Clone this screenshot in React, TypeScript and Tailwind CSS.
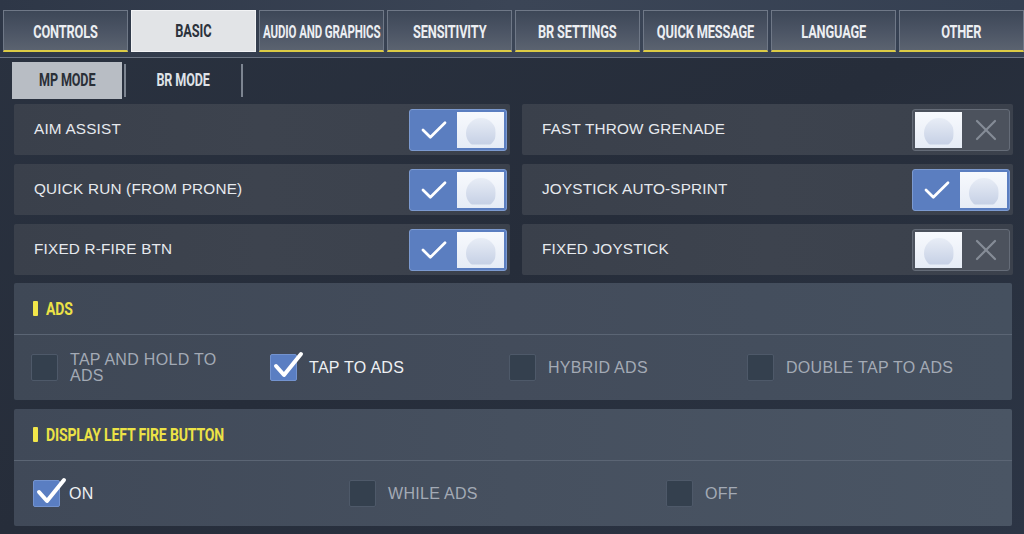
import React from "react";

const condensed = {
  fontFamily: '"Roboto", "Liberation Sans", sans-serif',
};

const tabs = ["CONTROLS", "BASIC", "AUDIO AND GRAPHICS", "SENSITIVITY", "BR SETTINGS", "QUICK MESSAGE", "LANGUAGE", "OTHER"];

function Check({ className = "" }: { className?: string }) {
  return (
    <svg viewBox="0 0 30 24" className={className} fill="none" stroke="white" strokeWidth="3" strokeLinecap="round" strokeLinejoin="round">
      <polyline points="3,12 11,20 27,4" />
    </svg>
  );
}

function Toggle({ on }: { on: boolean }) {
  const knob = (
    <div className="w-[47px] h-full bg-gradient-to-b from-[#f7f9fd] to-[#e6ecf6] flex items-center justify-center">
      <div className="w-[30px] h-[30px] rounded-full bg-gradient-to-b from-[#e8edf6] to-[#c2cde3] translate-y-[3px] [clip-path:inset(0_0_3px_0)]" />
    </div>
  );
  if (on) {
    return (
      <div className="flex w-[98px] h-[42px] rounded-[3px] border border-[#7c9ad0] bg-[#5b7ec0] overflow-hidden shrink-0 p-[2px] pl-0">
        <div className="flex-1 h-full flex items-center justify-center">
          <Check className="w-[28px] h-[22px]" />
        </div>
        {knob}
      </div>
    );
  }
  return (
    <div className="flex w-[98px] h-[42px] rounded-[3px] border border-[#656c78] bg-[#4c525d] overflow-hidden shrink-0 p-[2px] pr-0">
      {knob}
      <div className="flex-1 h-full flex items-center justify-center">
        <svg viewBox="0 0 24 24" className="w-[24px] h-[24px]" stroke="#858c97" strokeWidth="2.2" strokeLinecap="round">
          <line x1="3" y1="3" x2="21" y2="21" />
          <line x1="21" y1="3" x2="3" y2="21" />
        </svg>
      </div>
    </div>
  );
}

function Row({ label, on }: { label: string; on: boolean }) {
  return (
    <div className="h-[51px] bg-gradient-to-r from-[#3a404b] via-[#3d434e] to-[#3b414c] rounded-[2px] flex items-center justify-between pl-[20px] pr-[3px]">
      <span className="text-[15.3px] text-[#e6e9ee] tracking-[0.2px]">{label}</span>
      <Toggle on={on} />
    </div>
  );
}

function Box({ checked }: { checked: boolean }) {
  if (checked) {
    return (
      <div className="relative w-[27px] h-[27px] shrink-0 rounded-[2px] bg-[#5a7ec2] border border-[#7393cf]">
        <svg viewBox="0 0 34 30" className="absolute left-[2px] top-[-6px] w-[34px] h-[30px] overflow-visible" fill="none" stroke="white" strokeWidth="4" strokeLinecap="round" strokeLinejoin="round">
          <polyline points="3,17 11,26 28,5" />
        </svg>
      </div>
    );
  }
  return <div className="w-[27px] h-[27px] shrink-0 rounded-[2px] bg-[#34404e] border border-[#4e5969]" />;
}

function Option({ label, checked, w, narrow, gap = "gap-[12px]" }: { label: string; checked: boolean; w: string; narrow?: boolean; gap?: string }) {
  return (
    <div className={`flex items-center ${gap} ${w}`}>
      <Box checked={checked} />
      <span
        className={`text-[16px] tracking-[0.3px] leading-[16px] ${checked ? "text-[#eef0f3]" : "text-[#a3aab5]"} ${narrow ? "w-[160px]" : ""}`}
      >
        {label}
      </span>
    </div>
  );
}

function SectionHeader({ title }: { title: string }) {
  return (
    <div className="h-[52px] flex items-center pl-[19px] border-b border-[#5b6574]">
      <div className="w-[5px] h-[15px] bg-[#f2e64a] rounded-[1px] mr-[8px] shrink-0" />
      <span style={condensed} className="inline-block whitespace-nowrap origin-left scale-x-[0.78] text-[18px] leading-none font-bold text-[#ece246] tracking-[-0.2px]">
        {title}
      </span>
    </div>
  );
}

export default function App() {
  return (
    <div
      className="w-[1024px] h-[534px] overflow-hidden relative bg-gradient-to-br from-[#2a3240] via-[#262d3a] to-[#2c3545]"
      style={{ fontFamily: '"Liberation Sans", Arial, sans-serif' }}
    >
      {/* top band */}
      <div className="bg-gradient-to-r from-[#2e3747] via-[#3b4556] to-[#354052] pt-[10px] pl-[3px] pb-[5px] border-b border-[#6d7684]">
        <div className="flex gap-[3px]">
          {tabs.map((t) => {
            const active = t === "BASIC";
            return (
              <div
                key={t}
                className={`w-[125px] h-[42px] shrink-0 flex items-center justify-center border ${
                  active
                    ? "bg-[#e2e4e7] border-[#f2f3f5] text-[#2c323b]"
                    : "bg-gradient-to-b from-[#3d4757] via-[#4b5464] to-[#5b6370] border-[#6f7887] border-b-2 border-b-[#dccb45] text-[#eceef2]"
                }`}
              >
                <span
                  style={condensed}
                  className={`inline-block whitespace-nowrap leading-none font-bold tracking-[-0.2px] text-[18px] ${
                    t === "AUDIO AND GRAPHICS" ? "scale-x-[0.64]" : "scale-x-[0.71]"
                  } ${active ? "" : "translate-y-[1px]"}`}
                >
                  {t}
                </span>
              </div>
            );
          })}
        </div>
      </div>

      {/* sub tabs */}
      <div className="flex items-center pl-[12px] pt-[3px] h-[41px]">
        <div className="w-[110px] h-[37px] bg-[#b8bdc4] flex items-center justify-center">
          <span style={condensed} className="inline-block whitespace-nowrap leading-none scale-x-[0.7] text-[18px] font-bold text-[#2a2f37] tracking-[-0.2px]">
            MP MODE
          </span>
        </div>
        <div className="w-[2px] h-[33px] bg-[#7d8591] ml-[2px]" />
        <div className="w-[115px] h-[37px] flex items-center justify-center">
          <span style={condensed} className="inline-block whitespace-nowrap leading-none scale-x-[0.7] text-[18px] font-bold text-[#dfe2e7] tracking-[-0.2px]">
            BR MODE
          </span>
        </div>
        <div className="w-[2px] h-[33px] bg-[#7d8591]" />
      </div>

      {/* toggle rows */}
      <div className="grid grid-cols-[496px_491px] gap-x-[12px] gap-y-[9px] pl-[14px] mt-[5px]">
        <Row label="AIM ASSIST" on />
        <Row label="FAST THROW GRENADE" on={false} />
        <Row label="QUICK RUN (FROM PRONE)" on />
        <Row label="JOYSTICK AUTO-SPRINT" on />
        <Row label="FIXED R-FIRE BTN" on />
        <Row label="FIXED JOYSTICK" on={false} />
      </div>

      {/* ADS section */}
      <div className="ml-[14px] w-[998px] mt-[8px] bg-gradient-to-r from-[#3f4856] via-[#434c5b] to-[#45505f] rounded-[2px]">
        <SectionHeader title="ADS" />
        <div className="h-[65px] flex items-center pl-[17px]">
          <Option label="TAP AND HOLD TO ADS" checked={false} w="w-[239px]" narrow />
          <Option label="TAP TO ADS" checked w="w-[239px]" />
          <Option label="HYBRID ADS" checked={false} w="w-[238px]" />
          <Option label="DOUBLE TAP TO ADS" checked={false} w="w-[240px]" />
        </div>
      </div>

      {/* Display left fire button */}
      <div className="ml-[14px] w-[998px] mt-[9px] bg-gradient-to-r from-[#404958] via-[#46505f] to-[#4a5564] rounded-[2px]">
        <SectionHeader title="DISPLAY LEFT FIRE BUTTON" />
        <div className="h-[65px] flex items-center pl-[19px]">
          <Option label="ON" checked w="w-[316px]" gap="gap-[9px]" />
          <Option label="WHILE ADS" checked={false} w="w-[317px]" />
          <Option label="OFF" checked={false} w="w-[300px]" />
        </div>
      </div>
    </div>
  );
}
